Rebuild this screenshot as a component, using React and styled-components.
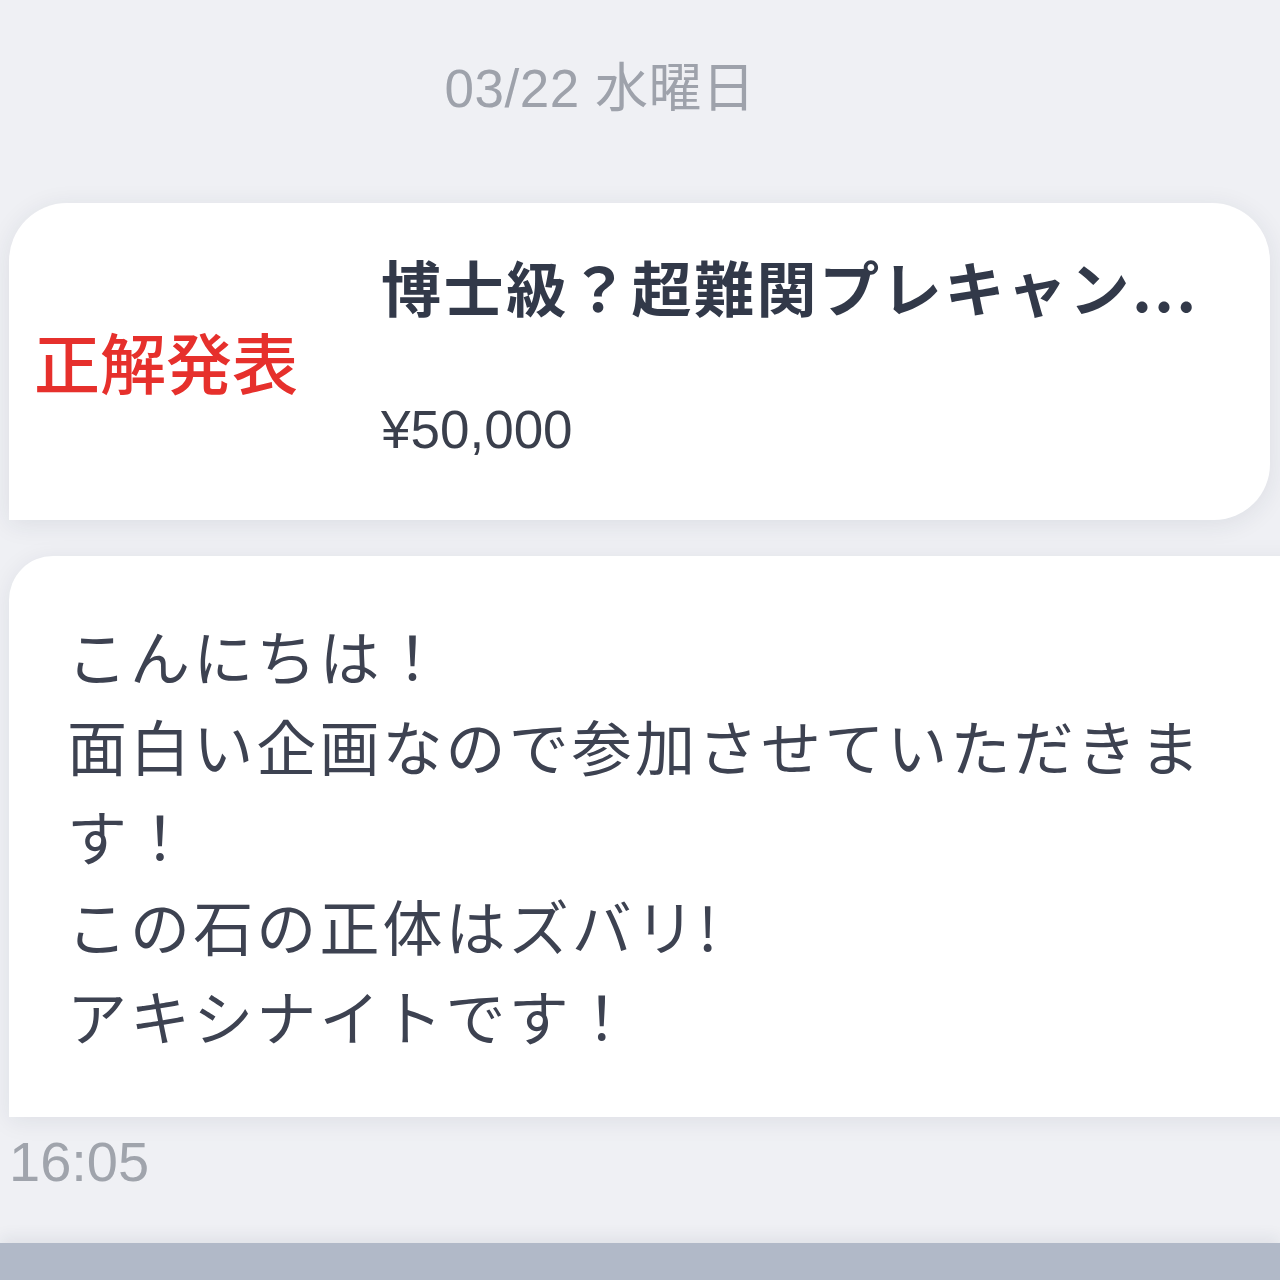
import React from 'react';
import styled, { createGlobalStyle } from 'styled-components';

const GlobalStyle = createGlobalStyle`
	html, body {
		margin: 0;
		padding: 0;
		background: #eff0f4;
	}
`;

const Page = styled.div`
	display: flex;
	flex-direction: column;
	width: 1280px;
	height: 1280px;
	overflow: hidden;
	background: #eff0f4;
	font-family: 'Liberation Sans', 'Noto Sans CJK JP', sans-serif;
`;

const DateLabel = styled.div`
	padding: 58px 80px 0 0;
	text-align: center;
	font-size: 53px;
	line-height: 62px;
	letter-spacing: 0.5px;
	color: #9ea2ab;
`;

const Feed = styled.div`
	display: flex;
	flex-direction: column;
	gap: 36px;
	margin-top: 83px;
	padding-left: 9px;
`;

const ProductCard = styled.div`
	display: flex;
	align-items: center;
	width: 1261px;
	height: 317px;
	background: #ffffff;
	border-radius: 58px 58px 56px 0;
	box-shadow: 0 4px 26px rgba(30, 40, 70, 0.09);
`;

const Thumb = styled.div`
	flex: 0 0 314px;
	display: flex;
	align-items: center;
	justify-content: center;
	height: 100%;
	padding-bottom: 4px;
	box-sizing: border-box;
	font-family: 'Noto Sans CJK JP', sans-serif;
	font-weight: 500;
	font-size: 66px;
	line-height: 1;
	color: #e6302c;
`;

const Info = styled.div`
	display: flex;
	flex-direction: column;
	gap: 77px;
	margin-left: 58px;
	padding-bottom: 12px;
	min-width: 0;
`;

const Title = styled.div`
	font-family: 'Noto Sans CJK JP', sans-serif;
	font-weight: 700;
	font-size: 60px;
	line-height: 72px;
	letter-spacing: 2.6px;
	color: #323949;
	white-space: nowrap;
`;

const Price = styled.div`
	font-size: 53px;
	line-height: 62px;
	color: #3a3f4c;
`;

const MessageBubble = styled.div`
	margin-right: -80px;
	padding: 54px 0 57px 58px;
	background: #ffffff;
	border-radius: 44px 44px 0 0;
	box-shadow: 0 4px 24px rgba(30, 40, 70, 0.08);
	font-family: 'Noto Sans CJK JP', sans-serif;
	font-size: 60px;
	line-height: 90px;
	letter-spacing: 3.1px;
	color: #3d4251;
`;

const Line = styled.div`
	white-space: nowrap;
`;

const Time = styled.div`
	margin-top: 12px;
	padding-left: 9px;
	font-size: 56px;
	line-height: 65px;
	color: #a0a4ac;
`;

const BottomBar = styled.div`
	margin-top: auto;
	height: 37px;
	background: #b1b9c8;
	box-shadow: 0 -6px 16px rgba(30, 40, 70, 0.07);
`;

const lines = [
	'こんにちは！',
	'面白い企画なので参加させていただきま',
	'す！',
	'この石の正体はズバリ!',
	'アキシナイトです！',
];

export default function App() {
	return (
		<>
			<GlobalStyle />
			<Page>
				<DateLabel>03/22 水曜日</DateLabel>
				<Feed>
					<ProductCard>
						<Thumb>正解発表</Thumb>
						<Info>
							<Title>博士級？超難関プレキャン...</Title>
							<Price>¥50,000</Price>
						</Info>
					</ProductCard>
					<MessageBubble>
						{lines.map((text) => (
							<Line key={text}>{text}</Line>
						))}
					</MessageBubble>
				</Feed>
				<Time>16:05</Time>
				<BottomBar />
			</Page>
		</>
	);
}
